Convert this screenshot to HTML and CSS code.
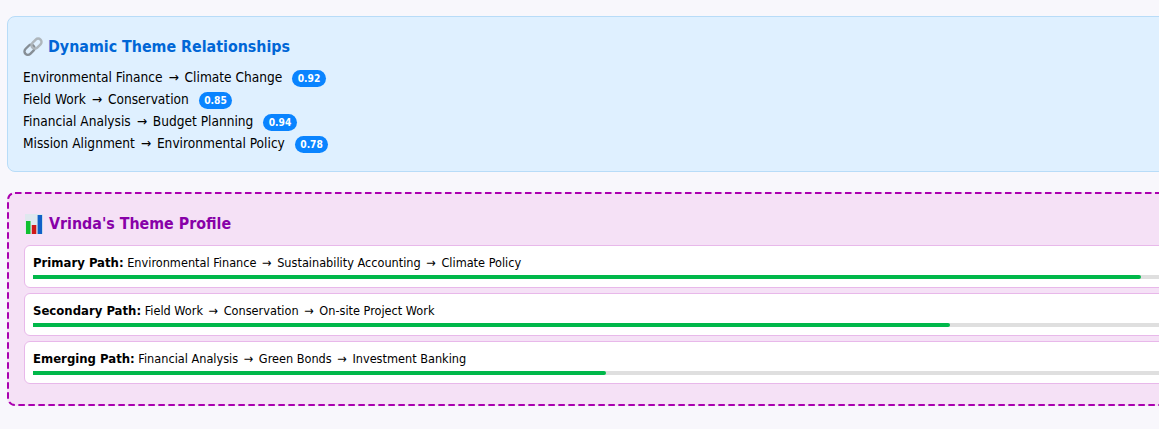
FILE: index.html
```html
<!DOCTYPE html>
<html lang="en">
<head>
<meta charset="utf-8">
<title>Theme Profile</title>
<link rel="stylesheet" href="styles.css">
</head>
<body>
<div class="page">
  <section class="panel relations">
    <h3 class="title title-blue">
      <svg class="icon" viewBox="0 0 20 20" aria-hidden="true">
        <rect x="0.8" y="9.4" width="11.4" height="6.8" rx="3.4" transform="rotate(-45 6.5 12.8)" fill="none" stroke="#868e95" stroke-width="2.4"/>
        <rect x="7.8" y="3.2" width="11.4" height="6.8" rx="3.4" transform="rotate(-45 13.5 6.6)" fill="none" stroke="#aeb6bc" stroke-width="2.4"/>
      </svg>
      Dynamic Theme Relationships
    </h3>
    <div class="rel">Environmental Finance <span class="arrow">→</span> Climate Change <span class="badge">0.92</span></div>
    <div class="rel">Field Work <span class="arrow">→</span> Conservation <span class="badge">0.85</span></div>
    <div class="rel">Financial Analysis <span class="arrow">→</span> Budget Planning <span class="badge">0.94</span></div>
    <div class="rel">Mission Alignment <span class="arrow">→</span> Environmental Policy <span class="badge">0.78</span></div>
  </section>
  <section class="panel profile">
    <svg class="dash" aria-hidden="true"><rect class="dash-line" x="1" y="1" rx="7" ry="7"/></svg>
    <h3 class="title title-purple">
      <svg class="icon" viewBox="0 0 20 20" aria-hidden="true">
        <rect x="1" y="0" width="18" height="20" fill="#dfe8ee"/>
        <rect x="2" y="7" width="4.5" height="13" fill="#10c030"/>
        <rect x="7.8" y="11" width="4.5" height="9" fill="#d01818"/>
        <rect x="13.6" y="1" width="4.5" height="19" fill="#1060c8"/>
      </svg>
      Vrinda's Theme Profile
    </h3>
    <div class="path">
      <div class="path-text"><strong>Primary Path:</strong> Environmental Finance <span class="arrow">→</span> Sustainability Accounting <span class="arrow">→</span> Climate Policy</div>
      <div class="track"><div class="fill" style="width:87%"></div></div>
    </div>
    <div class="path">
      <div class="path-text"><strong>Secondary Path:</strong> Field Work <span class="arrow">→</span> Conservation <span class="arrow">→</span> On-site Project Work</div>
      <div class="track"><div class="fill" style="width:72%"></div></div>
    </div>
    <div class="path">
      <div class="path-text"><strong>Emerging Path:</strong> Financial Analysis <span class="arrow">→</span> Green Bonds <span class="arrow">→</span> Investment Banking</div>
      <div class="track"><div class="fill" style="width:45%"></div></div>
    </div>
  </section>
</div>
</body>
</html>
```
FILE: styles.css
```css
html, body {
  margin: 0;
  overflow: hidden;
  background: #f8f7fc;
}
body {
  font-family: "DejaVu Sans Condensed", "DejaVu Sans", sans-serif;
  font-stretch: condensed;
  color: #000;
}
.page {
  width: 1326px;
  padding: 16px 0 0 7px;
  display: flex;
  flex-direction: column;
  gap: 20px;
}
.panel {
  border-radius: 8px;
  padding: 15px;
}
.relations {
  background: #dff0ff;
  border: 1px solid #b8dcf8;
  height: 156px;
  box-sizing: border-box;
}
.profile {
  position: relative;
  background: #f5e1f6;
  height: 214px;
  box-sizing: border-box;
  padding: 17px;
}
.dash {
  position: absolute;
  inset: 0;
  width: 100%;
  height: 100%;
}
.dash-line {
  width: calc(100% - 2px);
  height: calc(100% - 2px);
  fill: none;
  stroke: #aa00b0;
  stroke-width: 2;
  stroke-dasharray: 6.5 3.5;
}
.title {
  position: relative;
  display: flex;
  align-items: center;
  gap: 5px;
  margin: 4px 0 8px;
  font-size: 15.85px;
  line-height: 22px;
  font-weight: 700;
}
.title-purple {
  margin-bottom: 10px;
}
.title-blue { color: #0066d6; }
.title-purple { color: #8800a8; }
.icon {
  width: 20px;
  height: 20px;
  flex: none;
}
.rel {
  font-size: 13.6px;
  line-height: 22px;
  white-space: nowrap;
}
.arrow {
  padding: 0 2px;
}
.badge {
  display: inline-block;
  margin-left: 6px;
  padding: 0 5.5px;
  border-radius: 9px;
  background: #0a84ff;
  color: #fff;
  font-size: 10.2px;
  line-height: 17px;
  font-weight: 700;
}
.path {
  position: relative;
  background: #fff;
  border: 1px solid #e8b8ea;
  border-radius: 6px;
  padding: 8px 8px 0;
  height: 43px;
  box-sizing: border-box;
  margin-bottom: 5px;
}
.path-text {
  font-size: 12.6px;
  line-height: 17px;
  white-space: nowrap;
}
.path-text strong {
  font-size: 13px;
}
.track {
  height: 4px;
  margin-top: 4px;
  background: #dfdfdf;
}
.fill {
  height: 100%;
  border-radius: 0 2px 2px 0;
  background: #00b84a;
}
```
